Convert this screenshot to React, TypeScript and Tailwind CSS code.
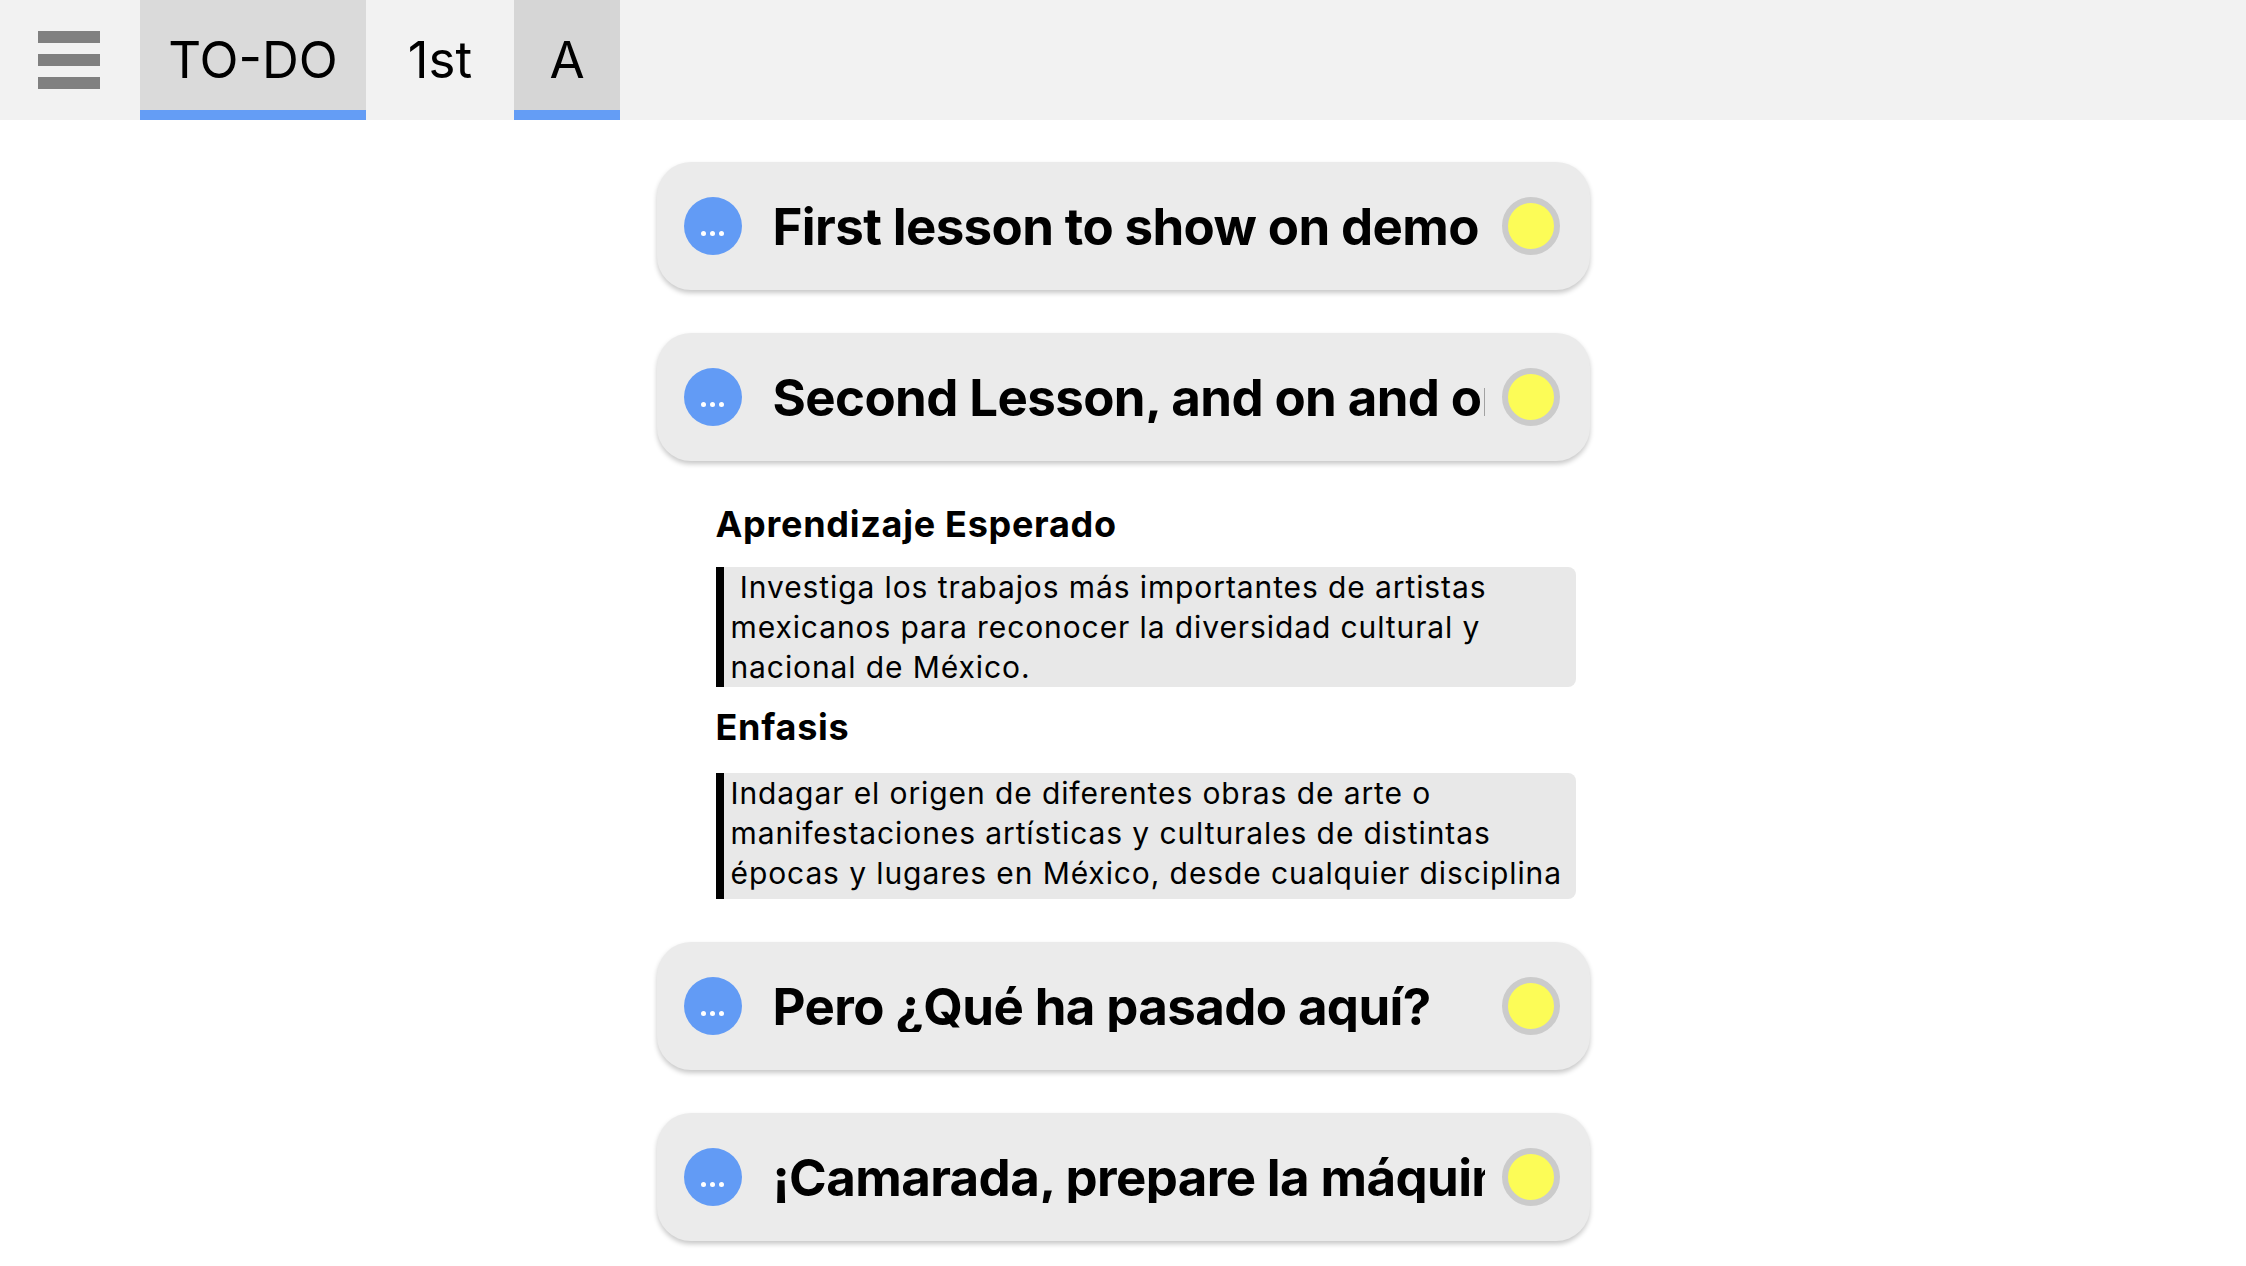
import type React from "react";

const lessons = [
  { id: 1, title: "First lesson to show on demo", open: false },
  { id: 2, title: "Second Lesson, and on and on and on", open: true },
  { id: 3, title: "Pero ¿Qué ha pasado aquí?", open: false },
  { id: 4, title: "¡Camarada, prepare la máquina del tiempo!", open: false },
];

const Tab: React.FC<{ label: string; active?: boolean; className: string }> = ({
  label,
  active,
  className,
}) => (
  <div
    className={`flex h-[120px] items-center justify-center text-[51px] text-black ${className} ${
      active ? "shadow-[inset_0_-10px_0_#649df5]" : ""
    }`}
  >
    {label}
  </div>
);

const LessonCard: React.FC<{ title: string }> = ({ title }) => (
  <div className="flex h-[128px] items-center rounded-[34px] bg-[#ebebeb] pr-[30px] pl-[27px] shadow-[0_3px_5px_rgba(0,0,0,0.22)]">
    <button
      type="button"
      className="flex h-[58px] w-[58px] shrink-0 items-center justify-center gap-[4px] rounded-full bg-[#629bf5] pt-[14px]"
    >
      <span className="h-[5px] w-[5px] rounded-full bg-white" />
      <span className="h-[5px] w-[5px] rounded-full bg-white" />
      <span className="h-[5px] w-[5px] rounded-full bg-white" />
    </button>
    <div className="ml-[31px] mr-[17px] flex-1 overflow-hidden whitespace-nowrap text-[51px] font-bold leading-none tracking-[-0.012em] text-black">
      {title}
    </div>
    <div className="h-[58px] w-[58px] shrink-0 rounded-full border-[6px] border-[#cbcbcb] bg-[#fcfc57]" />
  </div>
);

const Quote: React.FC<{ children: React.ReactNode; clip?: boolean }> = ({ children, clip }) => (
  <div
    className={`overflow-hidden rounded-r-[8px] border-l-[8px] border-black bg-[#e8e8e8] pl-[7px] text-[30px] leading-[40px] tracking-[0.03em] text-black ${
      clip ? "max-h-[126px]" : ""
    }`}
  >
    {children}
  </div>
);

export default function App() {
  return (
    <div className="min-h-screen bg-white font-['Inter',sans-serif]">
      <header className="flex h-[120px] items-stretch bg-[#f2f2f2]">
        <div className="flex w-[140px] flex-col justify-center gap-[11px] pl-[38px]">
          <span className="h-[12px] w-[62px] bg-[#808080]" />
          <span className="h-[12px] w-[62px] bg-[#808080]" />
          <span className="h-[12px] w-[62px] bg-[#808080]" />
        </div>
        <Tab label="TO-DO" active className="w-[226px] bg-[#dadada]" />
        <Tab label="1st" className="w-[148px]" />
        <Tab label="A" active className="w-[106px] bg-[#d6d6d6]" />
      </header>

      <main className="mx-auto flex w-[933px] flex-col pt-[42px]">
        {lessons.map((lesson) => (
          <div key={lesson.id} className="mb-[43px]">
            <LessonCard title={lesson.title} />
            {lesson.open && (
              <div className="mt-[43px] pr-[14px] pl-[59px]">
                <h3 className="text-[36px] font-bold leading-[41px] tracking-[0.02em]">Aprendizaje Esperado</h3>
                <div className="mt-[22px]">
                  <Quote>
                    {"\u00a0Investiga los trabajos más importantes de artistas mexicanos para reconocer la diversidad cultural y nacional de México."}
                  </Quote>
                </div>
                <h3 className="mt-[20px] text-[36px] font-bold leading-[41px] tracking-[0.02em]">Enfasis</h3>
                <div className="mt-[25px]">
                  <Quote clip>
                    Indagar el origen de diferentes obras de arte o manifestaciones artísticas y culturales de
                    distintas épocas y lugares en México, desde cualquier disciplina artística.
                  </Quote>
                </div>
              </div>
            )}
          </div>
        ))}
      </main>
    </div>
  );
}
